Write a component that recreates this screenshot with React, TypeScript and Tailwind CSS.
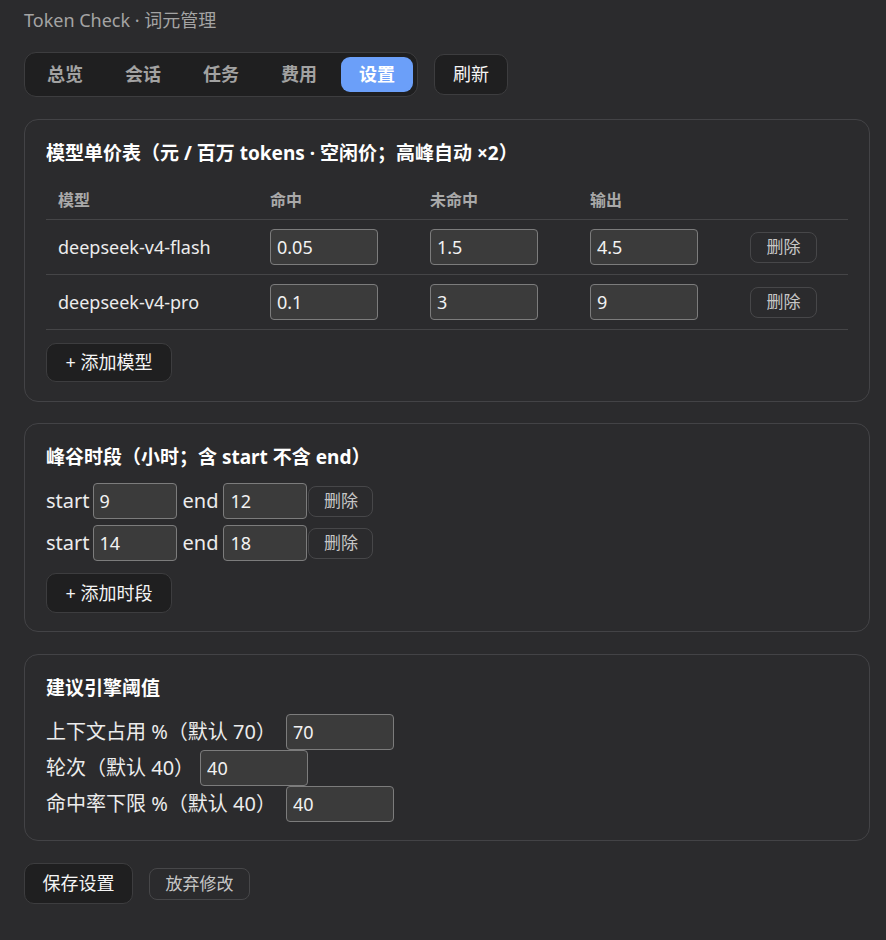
import React, { useState } from "react";

type Model = { name: string; hit: string; miss: string; out: string };
type Slot = { start: string; end: string };

const tabs = ["总览", "会话", "任务", "费用", "设置"];

const inputCls =
  "h-[36px] rounded-[4px] border border-[#7c7c7c] bg-[#3b3b3b] px-[6px] text-[18px] leading-none text-[#f2f2f2] outline-none";

const darkBtn =
  "rounded-[10px] border border-[#3d3d3f] bg-[#1f1f20] text-[18px] text-[#f5f5f5]";

const ghostBtn =
  "h-[31px] rounded-[8px] border border-[#474749] bg-transparent text-[17px] text-[#c6c6c6]";

function Card({
  title,
  bottom,
  children,
}: {
  title: string;
  bottom: string;
  children: React.ReactNode;
}) {
  return (
    <section className={`rounded-[14px] border border-[#434346] px-[21px] pt-[20px] ${bottom}`}>
      <h3 className="text-[19px] font-bold leading-[26px] text-white">{title}</h3>
      {children}
    </section>
  );
}

export default function App() {
  const [active, setActive] = useState(4);
  const [models] = useState<Model[]>([
    { name: "deepseek-v4-flash", hit: "0.05", miss: "1.5", out: "4.5" },
    { name: "deepseek-v4-pro", hit: "0.1", miss: "3", out: "9" },
  ]);
  const [slots] = useState<Slot[]>([
    { start: "9", end: "12" },
    { start: "14", end: "18" },
  ]);
  const thresholds = [
    { label: "上下文占用 %（默认 70）", value: "70", wide: true },
    { label: "轮次（默认 40）", value: "40", wide: false },
    { label: "命中率下限 %（默认 40）", value: "40", wide: true },
  ];

  return (
    <div className="min-h-[940px] bg-[#2b2b2d] pl-6 pr-4 pt-[6px] pb-8 font-['Noto_Sans','Noto_Sans_CJK_SC',sans-serif] text-[#e8e8e8]">
      <div className="text-[18px] leading-[28px] text-[#a4a4a4]">Token Check · 词元管理</div>

      <div className="mt-[18px] flex items-center">
        <nav className="flex gap-[6px] rounded-[12px] border border-[#3d3d3f] bg-[#1f1f20] p-[4px]">
          {tabs.map((t, i) => (
            <button
              key={t}
              onClick={() => setActive(i)}
              className={
                i === active
                  ? "h-[35px] w-[72px] rounded-[9px] bg-[#6b9ff9] text-[18px] font-bold text-white"
                  : "h-[35px] w-[72px] rounded-[9px] text-[18px] font-bold text-[#a2a2a2]"
              }
            >
              {t}
            </button>
          ))}
        </nav>
        <button className={`ml-4 h-[41px] w-[74px] ${darkBtn}`}>刷新</button>
      </div>

      <div className="mt-[22px] flex flex-col">
        <Card title="模型单价表（元 / 百万 tokens · 空闲价；高峰自动 ×2）" bottom="pb-[19px]">
          <table className="mt-[16px] w-full table-fixed border-collapse">
            <colgroup>
              <col className="w-[212px]" />
              <col className="w-[160px]" />
              <col className="w-[160px]" />
              <col className="w-[160px]" />
              <col />
            </colgroup>
            <thead>
              <tr className="border-b border-[#454547]">
                {["模型", "命中", "未命中", "输出", ""].map((h, i) => (
                  <th
                    key={i}
                    className="py-2 pl-3 text-left text-[16px] font-bold leading-[21px] text-[#a9a9a9]"
                  >
                    {h}
                  </th>
                ))}
              </tr>
            </thead>
            <tbody>
              {models.map((m) => (
                <tr key={m.name} className="border-b border-[#454547]">
                  <td className="py-[9px] pl-3 text-[18px] text-[#ececec]">{m.name}</td>
                  <td className="py-[9px] pl-3">
                    <input className={`w-[108px] ${inputCls}`} defaultValue={m.hit} />
                  </td>
                  <td className="py-[9px] pl-3">
                    <input className={`w-[108px] ${inputCls}`} defaultValue={m.miss} />
                  </td>
                  <td className="py-[9px] pl-3">
                    <input className={`w-[108px] ${inputCls}`} defaultValue={m.out} />
                  </td>
                  <td className="py-[9px] pl-3">
                    <button className={`w-[67px] ${ghostBtn}`}>删除</button>
                  </td>
                </tr>
              ))}
            </tbody>
          </table>
          <button className={`mt-[13px] h-[39px] w-[126px] ${darkBtn}`}>+ 添加模型</button>
        </Card>

        <div className="mt-[21px]">
          <Card title="峰谷时段（小时；含 start 不含 end）" bottom="pb-[18px]">
            <div className="mt-[13px] flex flex-col gap-[6px]">
              {slots.map((s, i) => (
                <div key={i} className="flex items-center text-[20px] text-[#ececec]">
                  <span>start</span>
                  <input className={`ml-[3px] w-[84px] ${inputCls}`} defaultValue={s.start} />
                  <span className="ml-[6px]">end</span>
                  <input className={`ml-[5px] w-[84px] ${inputCls}`} defaultValue={s.end} />
                  <button className={`ml-[1px] w-[65px] ${ghostBtn}`}>删除</button>
                </div>
              ))}
            </div>
            <button className={`mt-[12px] h-[40px] w-[126px] ${darkBtn}`}>+ 添加时段</button>
          </Card>
        </div>

        <div className="mt-[22px]">
          <Card title="建议引擎阈值" bottom="pb-[18px]">
            <div className="mt-[13px] flex flex-col">
              {thresholds.map((t) => (
                <div key={t.label} className="flex h-[36px] items-center text-[20px] text-[#ececec]">
                  <span>{t.label}</span>
                  <input
                    className={`${t.wide ? "ml-[10px]" : "ml-[6px]"} w-[108px] ${inputCls}`}
                    defaultValue={t.value}
                  />
                </div>
              ))}
            </div>
          </Card>
        </div>
      </div>

      <div className="mt-[22px] flex items-center gap-4">
        <button className={`h-[41px] w-[109px] ${darkBtn}`}>保存设置</button>
        <button className="h-[32px] w-[101px] rounded-[8px] border border-[#474749] text-[17px] text-[#c6c6c6]">
          放弃修改
        </button>
      </div>
    </div>
  );
}
